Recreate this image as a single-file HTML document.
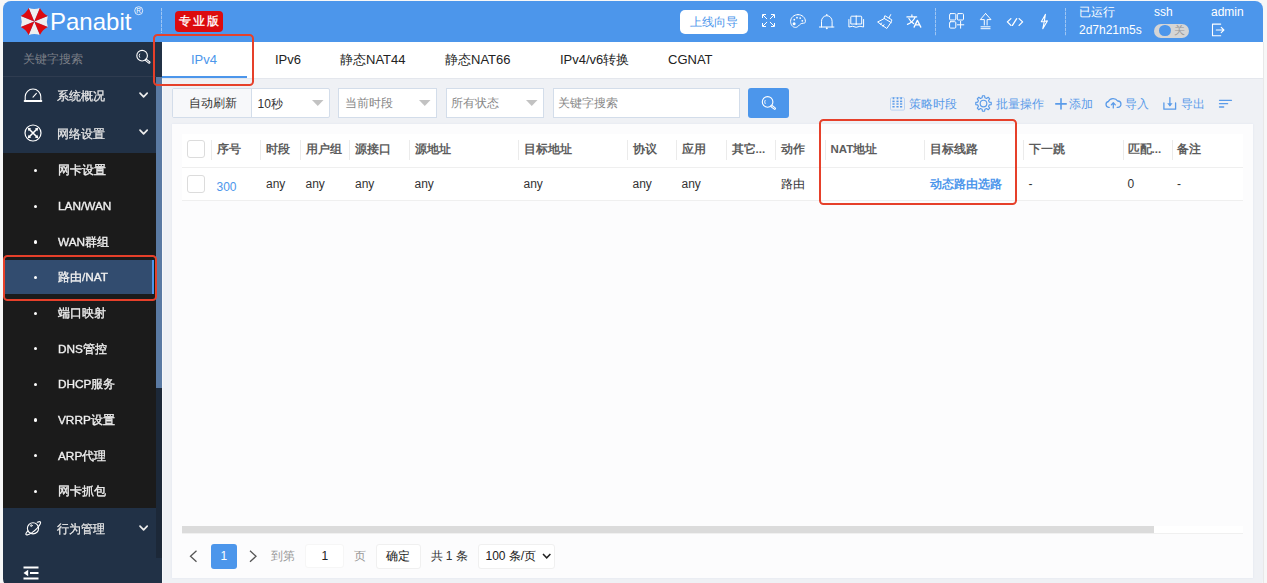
<!DOCTYPE html>
<html><head><meta charset="utf-8">
<style>
*{box-sizing:border-box;margin:0;padding:0}
html,body{width:1267px;height:583px;overflow:hidden;background:#f7f7f7;font-family:"Liberation Sans",sans-serif;font-size:12px;color:#333}
.a{position:absolute}
svg.a{overflow:visible}
.t{position:absolute;white-space:nowrap;line-height:14px}
.dash{position:absolute;width:1px;background:repeating-linear-gradient(to bottom,rgba(255,255,255,.45) 0 3px,rgba(255,255,255,.12) 3px 4px)}
.red{position:absolute;border:2.1px solid #e6402a;border-radius:4.5px}
#win{position:absolute;left:3px;top:1px;width:1260px;height:586px;border-radius:8px;overflow:hidden;background:#eff1f5}
.sb{will-change:transform;color:#e9e9e9;font-size:11.7px;-webkit-text-stroke:0.25px #e9e9e9}
.sub{will-change:transform;color:#f0f0f0;font-size:11.8px;-webkit-text-stroke:0.35px #f0f0f0}
.dot{position:absolute;width:3.2px;height:3.2px;border-radius:50%;background:#fff}
.th{font-weight:bold;color:#5c5c5c;font-size:11.5px}
.sep{position:absolute;width:1px;height:20px;background:#ebebeb;top:139.5px}
.tl{color:#5a9be9}
.ws{fill:none;stroke:#fff;stroke-width:1;stroke-linecap:round;stroke-linejoin:round}
.bs{fill:none;stroke:#5a9be9;stroke-width:1.3;stroke-linecap:round;stroke-linejoin:round}
</style></head>
<body>
<div id="win">
  <div class="a" style="left:0;top:0;width:1260px;height:41px;background:#4c96eb"></div>
  <div class="a" style="left:0;top:41px;width:158.5px;height:560px;background:#213146"></div>
</div>

<!-- HEADER -->
<svg class="a" style="left:0;top:0" width="60" height="42">
  <g transform="translate(34.3,21.5)">
    <path fill="#efefef" d="M0 0L-5.59 -13.49Q0.00 -11.69 5.59 -13.49ZM0 0L13.49 -5.59Q11.69 0.00 13.49 5.59ZM0 0L5.59 13.49Q0.00 11.69 -5.59 13.49ZM0 0L-13.49 5.59Q-11.69 0.00 -13.49 -5.59Z"/>
    <path fill="#de0a10" d="M0 0L5.59 -13.49Q8.27 -8.27 13.49 -5.59ZM0 0L13.49 5.59Q8.27 8.27 5.59 13.49ZM0 0L-5.59 13.49Q-8.27 8.27 -13.49 5.59ZM0 0L-13.49 -5.59Q-8.27 -8.27 -5.59 -13.49Z"/>
  </g>
</svg>
<div class="t" style="left:50px;top:9px;font-size:24px;line-height:26px;color:#fff">Panabit</div>
<svg class="a" style="left:133.5px;top:5.8px" width="10" height="10"><circle cx="4.7" cy="4.7" r="4" fill="none" stroke="#fff" stroke-width="0.8"/><text x="4.7" y="7" font-size="6.5" text-anchor="middle" fill="#fff" font-family="Liberation Sans">R</text></svg>
<div class="dash" style="left:161px;top:8px;height:25px"></div>
<div class="a" style="left:175px;top:10.5px;width:47.5px;height:21.5px;background:#dc0b0e;border-radius:4px"></div>
<div class="t" style="left:179px;top:13.5px;font-size:11.5px;letter-spacing:2px;color:#fff;-webkit-text-stroke:0.3px #fff">专业版</div>

<div class="a" style="left:680px;top:10px;width:67.5px;height:24px;background:#fff;border-radius:5px"></div>
<div class="t" style="left:690px;top:14.5px;color:#4c96eb">上线向导</div>
<!-- expand -->
<svg class="a ws" style="left:762px;top:14px" width="13" height="13">
  <path style="stroke-width:1" d="M1.2 1.2L4.8 4.8M11.8 1.2L8.2 4.8M1.2 11.8L4.8 8.2M11.8 11.8L8.2 8.2"/>
  <path style="stroke-width:1" d="M0.5 3.6V0.5H3.6 M9.4 0.5H12.5V3.6 M0.5 9.4V12.5H3.6 M9.4 12.5H12.5V9.4"/>
</svg>
<!-- palette -->
<svg class="a" style="left:789.8px;top:14.3px" width="16" height="14">
  <path class="ws" d="M8 0.6C12 0.6 15.4 3.5 15.4 7.3C15.4 8.8 14.7 9.2 13.4 9.2C11 9.2 10 10.4 8.5 11.9C7.5 12.9 6.6 13.4 5.5 13.4C2.6 13.4 0.6 10.6 0.6 7.4C0.6 3.5 4 0.6 8 0.6Z"/>
  <g fill="#fff"><circle cx="4.1" cy="9.7" r="1.5"/><circle cx="4.3" cy="5.7" r="0.9"/><circle cx="7" cy="3.7" r="0.9"/><circle cx="10.2" cy="4.1" r="0.9"/><circle cx="12.3" cy="6.8" r="0.9"/></g>
</svg>
<!-- bell -->
<svg class="a" style="left:819px;top:13.5px" width="16" height="16">
  <path class="ws" d="M2.5 13V7.3A5.3 5.6 0 0 1 13.1 7.3V13 M0.4 13H14.9"/>
  <circle cx="7.8" cy="0.9" r="0.8" fill="#fff"/><circle cx="7.8" cy="14.3" r="1" fill="#fff"/>
</svg>
<!-- book -->
<svg class="a ws" style="left:847.5px;top:14.5px" width="17" height="14">
  <path d="M8.2 1.2H3.6Q2.8 1.2 2.8 2V9H8.2 M8.2 1.2H12.9Q13.7 1.2 13.7 2V9H8.2 M8.2 1V9.5 M0.9 4.5V12Q4.6 10.4 8.2 12.3Q11.9 10.4 15.6 12V4.5"/>
</svg>
<!-- broom -->
<svg class="a ws" style="left:877px;top:13.5px" width="16" height="16">
  <path d="M13.7 0.6L12.1 3.7 M8.2 1.9L14.8 5.8L14.5 7.5L9.8 14.5L0.6 8L6.5 5Z M7.3 4.5L14.3 8.6 M3.5 10.5L4.5 9 M6 12.3L7 10.7"/>
</svg>
<!-- translate -->
<svg class="a ws" style="left:906px;top:13.5px" width="16" height="15">
  <path style="stroke-width:1.15" d="M0.9 2.9H10.7 M5.9 0.8V2.9 M2.9 4.5Q5 8.6 7.7 9.6 M9 3.5Q6.5 8.6 1.4 10.4"/>
  <path style="stroke-width:1.3" d="M8.1 13.1L11.4 6.4L14.8 13.1 M9.3 10.9H13.6"/>
</svg>
<div class="dash" style="left:935px;top:8px;height:28px"></div>
<!-- apps -->
<svg class="a ws" style="left:949px;top:13.4px" width="16" height="16" >
  <rect x="0.6" y="0.6" width="6.2" height="6.4" rx="1"/><rect x="8.3" y="0.6" width="6.2" height="6.4" rx="1"/><rect x="0.6" y="8.7" width="6.2" height="6.4" rx="1"/>
  <path d="M8.3 11.8H14.8 M11.6 8.4V15.2"/>
</svg>
<!-- upload -->
<svg class="a ws" style="left:980px;top:12.7px" width="12" height="17">
  <path d="M5.6 0.5L0.3 6.6H4.3V12 M5.6 0.5L11 6.6H7.1V12 M1 13.8H10.1 M1 15.7H10.1"/>
</svg>
<!-- code -->
<svg class="a ws" style="left:1007px;top:17.5px" width="17" height="9">
  <path style="stroke-width:1.3" d="M3.9 0.6L0.4 3.9L3.9 7.4 M9.7 0.7L5.4 7.4 M12.1 0.6L15.6 3.9L12.1 7.4"/>
</svg>
<!-- lightning -->
<svg class="a ws" style="left:1040px;top:13.5px" width="9" height="16">
  <path style="stroke-width:1.1" d="M5.4 0.4L1.3 7.8L4.3 7.5L2.8 14.7L7.4 6.9L4.3 7.2Z"/>
</svg>
<div class="dash" style="left:1065px;top:8px;height:28px"></div>
<div class="t" style="left:1079px;top:5px;color:#fff">已运行</div>
<div class="t" style="left:1079px;top:22.8px;color:#fff">2d7h21m5s</div>
<div class="t" style="left:1154px;top:5px;color:#fff">ssh</div>
<div class="a" style="left:1154px;top:23.7px;width:35px;height:14px;border-radius:7px;background:#d5d5d5"></div>
<div class="a" style="left:1159.2px;top:24.5px;width:11.8px;height:11.8px;border-radius:50%;background:#4c96eb"></div>
<div class="t" style="left:1173.5px;top:24px;font-size:11px;line-height:13px;color:#9a9a9a">关</div>
<div class="t" style="left:1211px;top:5px;color:#fff">admin</div>
<svg class="a ws" style="left:1211px;top:23px" width="14" height="14">
  <path style="stroke-width:1.1" d="M9.7 1.1H1.5V12.8H9.7 M5.3 7H12.8 M10.2 4.3L12.9 7L10.2 9.6"/>
</svg>

<!-- SIDEBAR -->
<div class="t" style="left:22.8px;top:52px;font-size:11.7px;color:#7b7f86">关键字搜索</div>
<svg class="a ws" style="left:135px;top:49px" width="17" height="16">
  <circle cx="7.1" cy="6.7" r="5.3" style="stroke-width:1.1"/><path d="M11.1 11L14.2 13.4" style="stroke-width:2.6"/><path d="M11.4 11.3L14 13.2" style="stroke:#213146;stroke-width:0.7"/><path d="M4.6 5A3 3 0 0 0 4.6 8.3" style="stroke-width:0.9"/>
</svg>
<div class="a" style="left:3px;top:76px;width:153px;height:1px;background:#2f3c50"></div>
<svg class="a ws" style="left:24px;top:87px" width="18" height="16">
  <path style="stroke-width:1.1" d="M1.2 13.5V9.8A7.8 7.8 0 0 1 16.8 9.8V13.5 M9 10.2L12.4 6.4"/>
  <path style="stroke-width:1.8" d="M0.6 14H17.4"/>
</svg>
<div class="t sb" style="left:56.5px;top:89px">系统概况</div>
<svg class="a ws" style="left:138.5px;top:91.5px" width="10" height="7"><path style="stroke-width:1.7;stroke:#ececec" d="M1 1.2L4.6 4.9L8.2 1.2"/></svg>
<svg class="a ws" style="left:24px;top:123.5px" width="18" height="18">
  <circle cx="9" cy="9" r="8" style="stroke-width:1.2"/>
  <path style="stroke-width:1.6" d="M5 5L13 13M13 5L5 13"/>
  <path fill="#fff" stroke="none" d="M3.8 3.8L7.2 4.6L4.6 7.2Z M14.2 3.8L13.4 7.2L10.8 4.6Z M3.8 14.2L4.6 10.8L7.2 13.4Z M14.2 14.2L10.8 13.4L13.4 10.8Z"/>
</svg>
<div class="t sb" style="left:56.5px;top:126.5px">网络设置</div>
<svg class="a ws" style="left:138.5px;top:129px" width="10" height="7"><path style="stroke-width:1.7;stroke:#ececec" d="M1 1.2L4.6 4.9L8.2 1.2"/></svg>

<div class="a" style="left:3px;top:153.3px;width:153px;height:354.7px;background:#1b1b1b"></div>
<div class="a" style="left:3px;top:260px;width:150.5px;height:34px;background:#324c6f"></div>
<div class="a" style="left:151.8px;top:260px;width:2.1px;height:34px;background:#4c96eb"></div>

<div class="t sub" style="left:58px;top:163.30px">网卡设置</div>
<div class="t sub" style="left:58px;top:198.96px">LAN/WAN</div>
<div class="t sub" style="left:58px;top:234.62px">WAN群组</div>
<div class="t sub" style="left:58px;top:270.28px">路由/NAT</div>
<div class="t sub" style="left:58px;top:305.94px">端口映射</div>
<div class="t sub" style="left:58px;top:341.60px">DNS管控</div>
<div class="t sub" style="left:58px;top:377.26px">DHCP服务</div>
<div class="t sub" style="left:58px;top:412.92px">VRRP设置</div>
<div class="t sub" style="left:58px;top:448.58px">ARP代理</div>
<div class="t sub" style="left:58px;top:484.24px">网卡抓包</div>
<div class="dot" style="left:33.5px;top:169.20px"></div>
<div class="dot" style="left:33.5px;top:204.79px"></div>
<div class="dot" style="left:33.5px;top:240.38px"></div>
<div class="dot" style="left:33.5px;top:275.97px"></div>
<div class="dot" style="left:33.5px;top:311.56px"></div>
<div class="dot" style="left:33.5px;top:347.15px"></div>
<div class="dot" style="left:33.5px;top:382.74px"></div>
<div class="dot" style="left:33.5px;top:418.33px"></div>
<div class="dot" style="left:33.5px;top:453.92px"></div>
<div class="dot" style="left:33.5px;top:489.51px"></div>
<svg class="a ws" style="left:25px;top:520px" width="17" height="17">
  <circle cx="8" cy="8.3" r="5.6" style="stroke-width:1.1"/>
  <path style="stroke-width:1.1" d="M12.3 2.3Q16.5 0.5 15.4 3.5Q13.5 8 7 12.6Q1.8 16 0.9 14.4Q0.4 13.3 3 10.8"/>
  <circle cx="6.3" cy="5.6" r="0.9" style="stroke-width:0.8"/>
</svg>
<div class="t sb" style="left:56.5px;top:522px">行为管理</div>
<svg class="a ws" style="left:138.5px;top:525px" width="10" height="7"><path style="stroke-width:1.7;stroke:#ececec" d="M1 1.2L4.6 4.9L8.2 1.2"/></svg>
<svg class="a" style="left:23px;top:566px" width="17" height="14">
  <path fill="none" stroke="#fff" stroke-width="2" d="M0.5 1.5H15.5 M7 7H15.5 M0.5 12.6H15.5"/>
  <path fill="#fff" d="M0.5 7L5.2 3.8V10.2Z"/>
</svg>
<!-- sidebar scrollbar -->
<div class="a" style="left:156px;top:77px;width:5.5px;height:481px;background:#1c2838"></div>
<div class="a" style="left:156px;top:77px;width:5.5px;height:311px;background:#5a7aa3"></div>
<div class="a" style="left:161.5px;top:42px;width:1px;height:541px;background:#f7f8fa"></div>

<!-- TABS -->
<div class="a" style="left:161.5px;top:42px;width:1101.5px;height:36px;background:#fff"></div>
<div class="a" style="left:161.5px;top:78px;width:1101.5px;height:1px;background:#e4e7ed"></div>
<div class="a" style="left:161.5px;top:76px;width:85px;height:2px;background:#4c96eb"></div>
<div class="t" style="left:191px;top:52px;font-size:13px;line-height:15px;color:#4c96eb">IPv4</div>
<div class="t" style="left:275px;top:52px;font-size:13px;line-height:15px;color:#222">IPv6</div>
<div class="t" style="left:340px;top:52px;font-size:13px;line-height:15px;color:#222">静态NAT44</div>
<div class="t" style="left:445px;top:52px;font-size:13px;line-height:15px;color:#222">静态NAT66</div>
<div class="t" style="left:560px;top:52px;font-size:13px;line-height:15px;color:#222">IPv4/v6转换</div>
<div class="t" style="left:668px;top:52px;font-size:13px;line-height:15px;color:#222">CGNAT</div>

<!-- TOOLBAR -->
<div class="a" style="left:172px;top:88px;width:158px;height:30px;border:1px solid #d3ddea;border-radius:2px;background:#fff"></div>
<div class="a" style="left:173px;top:89px;width:79px;height:28px;background:#f7f8fa;border-right:1px solid #d3ddea"></div>
<div class="t" style="left:189px;top:96px;color:#333">自动刷新</div>
<div class="t" style="left:257.5px;top:97px;color:#333">10秒</div>
<svg class="a" style="left:312px;top:100px" width="12" height="7"><path d="M0 0H11.5L5.75 6Z" fill="#c2c2c2"/></svg>
<div class="a" style="left:338px;top:88px;width:98.5px;height:30px;border:1px solid #d3ddea;background:#fff"></div>
<div class="t" style="left:344.5px;top:96px;color:#888">当前时段</div>
<svg class="a" style="left:419px;top:100px" width="12" height="7"><path d="M0 0H11.5L5.75 6Z" fill="#c2c2c2"/></svg>
<div class="a" style="left:445.5px;top:88px;width:98.5px;height:30px;border:1px solid #d3ddea;background:#fff"></div>
<div class="t" style="left:451px;top:96px;color:#888">所有状态</div>
<svg class="a" style="left:526px;top:100px" width="12" height="7"><path d="M0 0H11.5L5.75 6Z" fill="#c2c2c2"/></svg>
<div class="a" style="left:552.5px;top:88px;width:187px;height:30px;border:1px solid #d3ddea;background:#fff"></div>
<div class="t" style="left:558px;top:96px;color:#888">关键字搜索</div>
<div class="a" style="left:748px;top:88.3px;width:41px;height:29.4px;background:#4c96eb;border-radius:3px"></div>
<svg class="a ws" style="left:761px;top:95px" width="17" height="16">
  <circle cx="6.6" cy="6.9" r="5.3" style="stroke-width:1.1"/><path d="M10.6 11.1L13.7 13.5" style="stroke-width:2.6"/><path d="M10.9 11.4L13.5 13.3" style="stroke:#4c96eb;stroke-width:0.7"/><path d="M4.1 5.3A3 3 0 0 0 4.1 8.6" style="stroke-width:0.9"/>
</svg>

<svg class="a" style="left:890px;top:96.5px" width="15" height="14">
  <rect x="0.5" y="0.7" width="14" height="12.4" rx="1.2" fill="none" stroke="#b9d3f3" stroke-width="1"/>
  <g fill="#5a9be9"><rect x="2.7" y="0.3" width="1.6" height="2"/><rect x="6.7" y="0.3" width="1.6" height="2"/><rect x="10.3" y="0.3" width="1.6" height="2"/>
  <rect x="2.4" y="3.6" width="2.2" height="1.6"/><rect x="6.4" y="3.6" width="2.2" height="1.6"/><rect x="10" y="3.6" width="2.2" height="1.6"/>
  <rect x="2.4" y="6.3" width="2.2" height="1.4"/><rect x="6.4" y="6.3" width="2.2" height="1.4"/><rect x="10" y="6.3" width="2.2" height="1.4"/>
  <rect x="2.4" y="9" width="2.2" height="1.5"/><rect x="6.4" y="9" width="2.2" height="1.5"/><rect x="10" y="9" width="2.2" height="1.5"/></g>
</svg>
<div class="t tl" style="left:909px;top:97px">策略时段</div>
<svg class="a bs" style="left:975px;top:95px" width="17" height="17">
  <path style="stroke-width:1.15" d="M7.07 2.78 L7.41 0.78 L9.59 0.78 L9.93 2.78 L11.54 3.44 L13.19 2.27 L14.73 3.81 L13.56 5.46 L14.22 7.07 L16.22 7.41 L16.22 9.59 L14.22 9.93 L13.56 11.54 L14.73 13.19 L13.19 14.73 L11.54 13.56 L9.93 14.22 L9.59 16.22 L7.41 16.22 L7.07 14.22 L5.46 13.56 L3.81 14.73 L2.27 13.19 L3.44 11.54 L2.78 9.93 L0.78 9.59 L0.78 7.41 L2.78 7.07 L3.44 5.46 L2.27 3.81 L3.81 2.27 L5.46 3.44Z"/>
  <circle cx="8.5" cy="8.5" r="3.3" style="stroke-width:1.15"/>
</svg>
<div class="t tl" style="left:996px;top:97px">批量操作</div>
<svg class="a bs" style="left:1054.5px;top:97.5px" width="12" height="12"><path style="stroke-width:1.6" d="M0.8 5.9H11.2 M6 0.7V11"/></svg>
<div class="t tl" style="left:1068.5px;top:97px">添加</div>
<svg class="a bs" style="left:1105px;top:96.5px" width="17" height="12">
  <path style="stroke-width:1.3" d="M4.2 10.4H3.6A3 3 0 0 1 3.4 4.5A5 4.4 0 0 1 12.6 4A3.2 3.2 0 0 1 12.9 10.4H12.2 M8.3 6V10.9 M6.3 7.9L8.3 5.8L10.3 7.9"/>
</svg>
<div class="t tl" style="left:1125px;top:97px">导入</div>
<svg class="a bs" style="left:1162.5px;top:97px" width="14" height="13">
  <path style="stroke-width:1.3" d="M0.9 5.9V12.2H12.6V5.9 M6.9 0.6V8.6"/>
  <path fill="#5a9be9" stroke="none" d="M4.2 6.3H9.6L6.9 9.6Z"/>
</svg>
<div class="t tl" style="left:1181px;top:97px">导出</div>
<svg class="a bs" style="left:1219px;top:99px" width="14" height="10"><path style="stroke-width:1.3" d="M0.5 1.3H12.5 M0.5 4.7H8.6 M0.5 8H4.7"/></svg>

<!-- PANEL -->
<div class="a" style="left:172px;top:123.5px;width:1081px;height:454px;background:#fcfcfd;box-shadow:0 0 2px #dfe5f0"></div>
<div class="a" style="left:181.5px;top:133.5px;width:1061.5px;height:66.5px;background:#fff"></div>
<div class="a" style="left:181.5px;top:167px;width:1061.5px;height:1px;background:#efefef"></div>
<div class="a" style="left:181.5px;top:199.5px;width:1061.5px;height:1px;background:#efefef"></div>
<div class="a" style="left:187px;top:140px;width:18px;height:18px;border:1px solid #dcdcdc;border-radius:3px;background:#fff"></div>
<div class="a" style="left:187px;top:174.7px;width:18px;height:18px;border:1px solid #dcdcdc;border-radius:3px;background:#fff"></div>

<div class="sep" style="left:210.5px"></div>
<div class="sep" style="left:260px"></div>
<div class="sep" style="left:300px"></div>
<div class="sep" style="left:349px"></div>
<div class="sep" style="left:408.5px"></div>
<div class="sep" style="left:517.5px"></div>
<div class="sep" style="left:626.5px"></div>
<div class="sep" style="left:676px"></div>
<div class="sep" style="left:725.5px"></div>
<div class="sep" style="left:775px"></div>
<div class="sep" style="left:825px"></div>
<div class="sep" style="left:924px"></div>
<div class="sep" style="left:1023px"></div>
<div class="sep" style="left:1122.5px"></div>
<div class="sep" style="left:1171.5px"></div>

<div class="t th" style="left:216.5px;top:142.2px">序号</div>
<div class="t th" style="left:266px;top:142.2px">时段</div>
<div class="t th" style="left:305.5px;top:142.2px">用户组</div>
<div class="t th" style="left:355px;top:142.2px">源接口</div>
<div class="t th" style="left:414.5px;top:142.2px">源地址</div>
<div class="t th" style="left:523.5px;top:142.2px">目标地址</div>
<div class="t th" style="left:632.5px;top:142.2px">协议</div>
<div class="t th" style="left:681.5px;top:142.2px">应用</div>
<div class="t th" style="left:731.5px;top:142.2px">其它...</div>
<div class="t th" style="left:781px;top:142.2px">动作</div>
<div class="t th" style="left:830.5px;top:142.2px">NAT地址</div>
<div class="t th" style="left:930px;top:142.2px">目标线路</div>
<div class="t th" style="left:1028.5px;top:142.2px">下一跳</div>
<div class="t th" style="left:1127.5px;top:142.2px">匹配...</div>
<div class="t th" style="left:1177px;top:142.2px">备注</div>

<div class="t" style="left:216.5px;top:179.8px;color:#4c96eb">300</div>
<div class="t" style="left:266px;top:177px">any</div>
<div class="t" style="left:305.5px;top:177px">any</div>
<div class="t" style="left:355px;top:177px">any</div>
<div class="t" style="left:414.5px;top:177px">any</div>
<div class="t" style="left:523.5px;top:177px">any</div>
<div class="t" style="left:632.5px;top:177px">any</div>
<div class="t" style="left:681.5px;top:177px">any</div>
<div class="t" style="left:781px;top:177px">路由</div>
<div class="t" style="left:930px;top:177px;color:#4c96eb;font-weight:bold">动态路由选路</div>
<div class="t" style="left:1028.5px;top:177px">-</div>
<div class="t" style="left:1127.5px;top:177px">0</div>
<div class="t" style="left:1177px;top:177px">-</div>

<!-- h scrollbar -->
<div class="a" style="left:181.5px;top:526px;width:1061.5px;height:7px;background:#fff;box-shadow:0 1px 0 #f0f0f0"></div>
<div class="a" style="left:181.5px;top:526px;width:972.5px;height:7px;background:#dbdbdb"></div>

<!-- PAGINATION -->
<svg class="a" style="left:189px;top:549.5px" width="9" height="13"><path d="M7.5 0.8L1.5 6.3L7.5 11.8" fill="none" stroke="#555" stroke-width="1.3"/></svg>
<div class="a" style="left:210.5px;top:543.5px;width:26.5px;height:25.5px;background:#4c96eb;border-radius:3px"></div>
<div class="t" style="left:220.5px;top:549px;color:#fff">1</div>
<svg class="a" style="left:249px;top:549.5px" width="9" height="13"><path d="M1 0.8L7 6.3L1 11.8" fill="none" stroke="#555" stroke-width="1.3"/></svg>
<div class="t" style="left:271px;top:549px;color:#999">到第</div>
<div class="a" style="left:304.5px;top:544px;width:39px;height:24px;background:#fff;border:1px solid #f6f6f6;border-radius:3px"></div>
<div class="t" style="left:321.5px;top:549px;color:#222">1</div>
<div class="t" style="left:354px;top:549px;color:#999">页</div>
<div class="a" style="left:376px;top:543.5px;width:44.5px;height:25px;background:#fff;border:1px solid #f0f0f0;border-radius:3px"></div>
<div class="t" style="left:386px;top:549px;color:#222">确定</div>
<div class="t" style="left:430.5px;top:549px;color:#333">共 1 条</div>
<div class="a" style="left:477.5px;top:543.5px;width:77px;height:25px;background:#fff;border:1px solid #f0f0f0;border-radius:3px"></div>
<div class="t" style="left:485.5px;top:549px;color:#222">100 条/页</div>
<svg class="a" style="left:542px;top:553px" width="10" height="7"><path d="M1 1L4.7 4.8L8.4 1" fill="none" stroke="#222" stroke-width="1.5"/></svg>

<div class="a" style="left:1263px;top:42px;width:1px;height:541px;background:#e8e8e8"></div>
<!-- RED ANNOTATIONS -->
<div class="red" style="left:153.1px;top:33.7px;width:100.6px;height:52px"></div>
<div class="red" style="left:2.9px;top:254.7px;width:154.3px;height:46.3px"></div>
<div class="red" style="left:818.6px;top:118.6px;width:198.4px;height:86px"></div>
</body></html>
